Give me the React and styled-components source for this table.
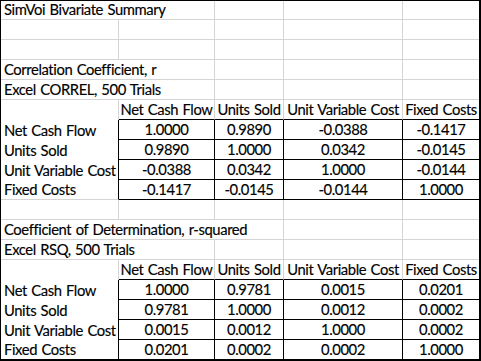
import React from "react";
import styled, { createGlobalStyle } from "styled-components";

const GRID = "#d4d4d4";
const INK = "#000";

const GlobalStyle = createGlobalStyle`
  html, body {
    margin: 0;
    padding: 0;
    background: #fff;
  }
`;

const Sheet = styled.div`
  box-sizing: border-box;
  width: 481px;
  height: 361px;
  display: grid;
  grid-template-columns: 118px 96px 69px 119px 76px;
  grid-template-rows: 19px repeat(16, 20px) 19px;
  border-top: 1px solid ${INK};
  border-left: 1px solid ${INK};
  border-right: 2px solid ${INK};
  border-bottom: 2px solid ${INK};
  font-family: Lato, "Liberation Sans", sans-serif;
  font-size: 14.8px;
  letter-spacing: -0.4px;
  word-spacing: 1px;
  -webkit-text-stroke: 0.15px #000;
  color: #000;
  background: #fff;
`;

const Cell = styled.div`
  box-sizing: border-box;
  min-width: 0;
  display: flex;
  align-items: flex-end;
  justify-content: ${(p) => (p.$center ? "center" : "flex-start")};
  padding: 0 ${(p) => (p.$center ? 0 : 3)}px 0 ${(p) => (p.$center ? 0 : 3)}px;
  line-height: 19px;
  white-space: nowrap;
  overflow: visible;
  border-right: ${(p) => (p.$right ? `1px solid ${p.$right}` : "none")};
  border-bottom: ${(p) => (p.$bottom ? `1px solid ${p.$bottom}` : "none")};
`;

const names = ["Net Cash Flow", "Units Sold", "Unit Variable Cost", "Fixed Costs"];

const correl = [
  ["1.0000", "0.9890", "-0.0388", "-0.1417"],
  ["0.9890", "1.0000", "0.0342", "-0.0145"],
  ["-0.0388", "0.0342", "1.0000", "-0.0144"],
  ["-0.1417", "-0.0145", "-0.0144", "1.0000"],
];

const rsq = [
  ["1.0000", "0.9781", "0.0015", "0.0201"],
  ["0.9781", "1.0000", "0.0012", "0.0002"],
  ["0.0015", "0.0012", "1.0000", "0.0002"],
  ["0.0201", "0.0002", "0.0002", "1.0000"],
];

// each row: { kind, text, spill } — spill = how many right gridlines the title hides
const titleRow = (text, spill) => ({ kind: "title", text, spill });
const blank = { kind: "blank" };

const tableRows = (matrix) => [
  { kind: "header" },
  ...matrix.map((vals, i) => ({
    kind: "data",
    label: names[i],
    vals,
    last: i === matrix.length - 1,
  })),
];

const rows = [
  titleRow("SimVoi Bivariate Summary", 1),
  blank,
  blank,
  titleRow("Correlation Coefficient, r", 1),
  titleRow("Excel CORREL, 500 Trials", 1),
  ...tableRows(correl),
  blank,
  titleRow("Coefficient of Determination, r-squared", 2),
  titleRow("Excel RSQ, 500 Trials", 1),
  ...tableRows(rsq),
];

function renderRow(row, r, lastRow) {
  const cells = [];
  for (let c = 0; c < 5; c++) {
    const lastCol = c === 4;
    let right = lastCol ? null : GRID;
    let bottom = lastRow ? null : GRID;
    let text = null;
    let center = false;

    if (row.kind === "title") {
      if (c === 0) text = row.text;
      if (c < row.spill) right = null;
    } else if (row.kind === "header") {
      if (c === 0) {
        bottom = null;
      } else {
        text = names[c - 1];
        center = true;
        if (!lastRow) bottom = INK;
      }
    } else if (row.kind === "data") {
      if (c === 0) {
        text = row.label;
        right = INK;
        if (!row.last) bottom = null;
      } else {
        text = row.vals[c - 1];
        center = true;
        if (!lastCol) right = INK;
        if (!lastRow) bottom = INK;
      }
    }

    cells.push(
      <Cell key={`${r}-${c}`} $right={right} $bottom={bottom} $center={center}>
        {text}
      </Cell>
    );
  }
  return cells;
}

export default function App() {
  return (
    <>
      <GlobalStyle />
      <Sheet>{rows.map((row, r) => renderRow(row, r, r === rows.length - 1))}</Sheet>
    </>
  );
}
